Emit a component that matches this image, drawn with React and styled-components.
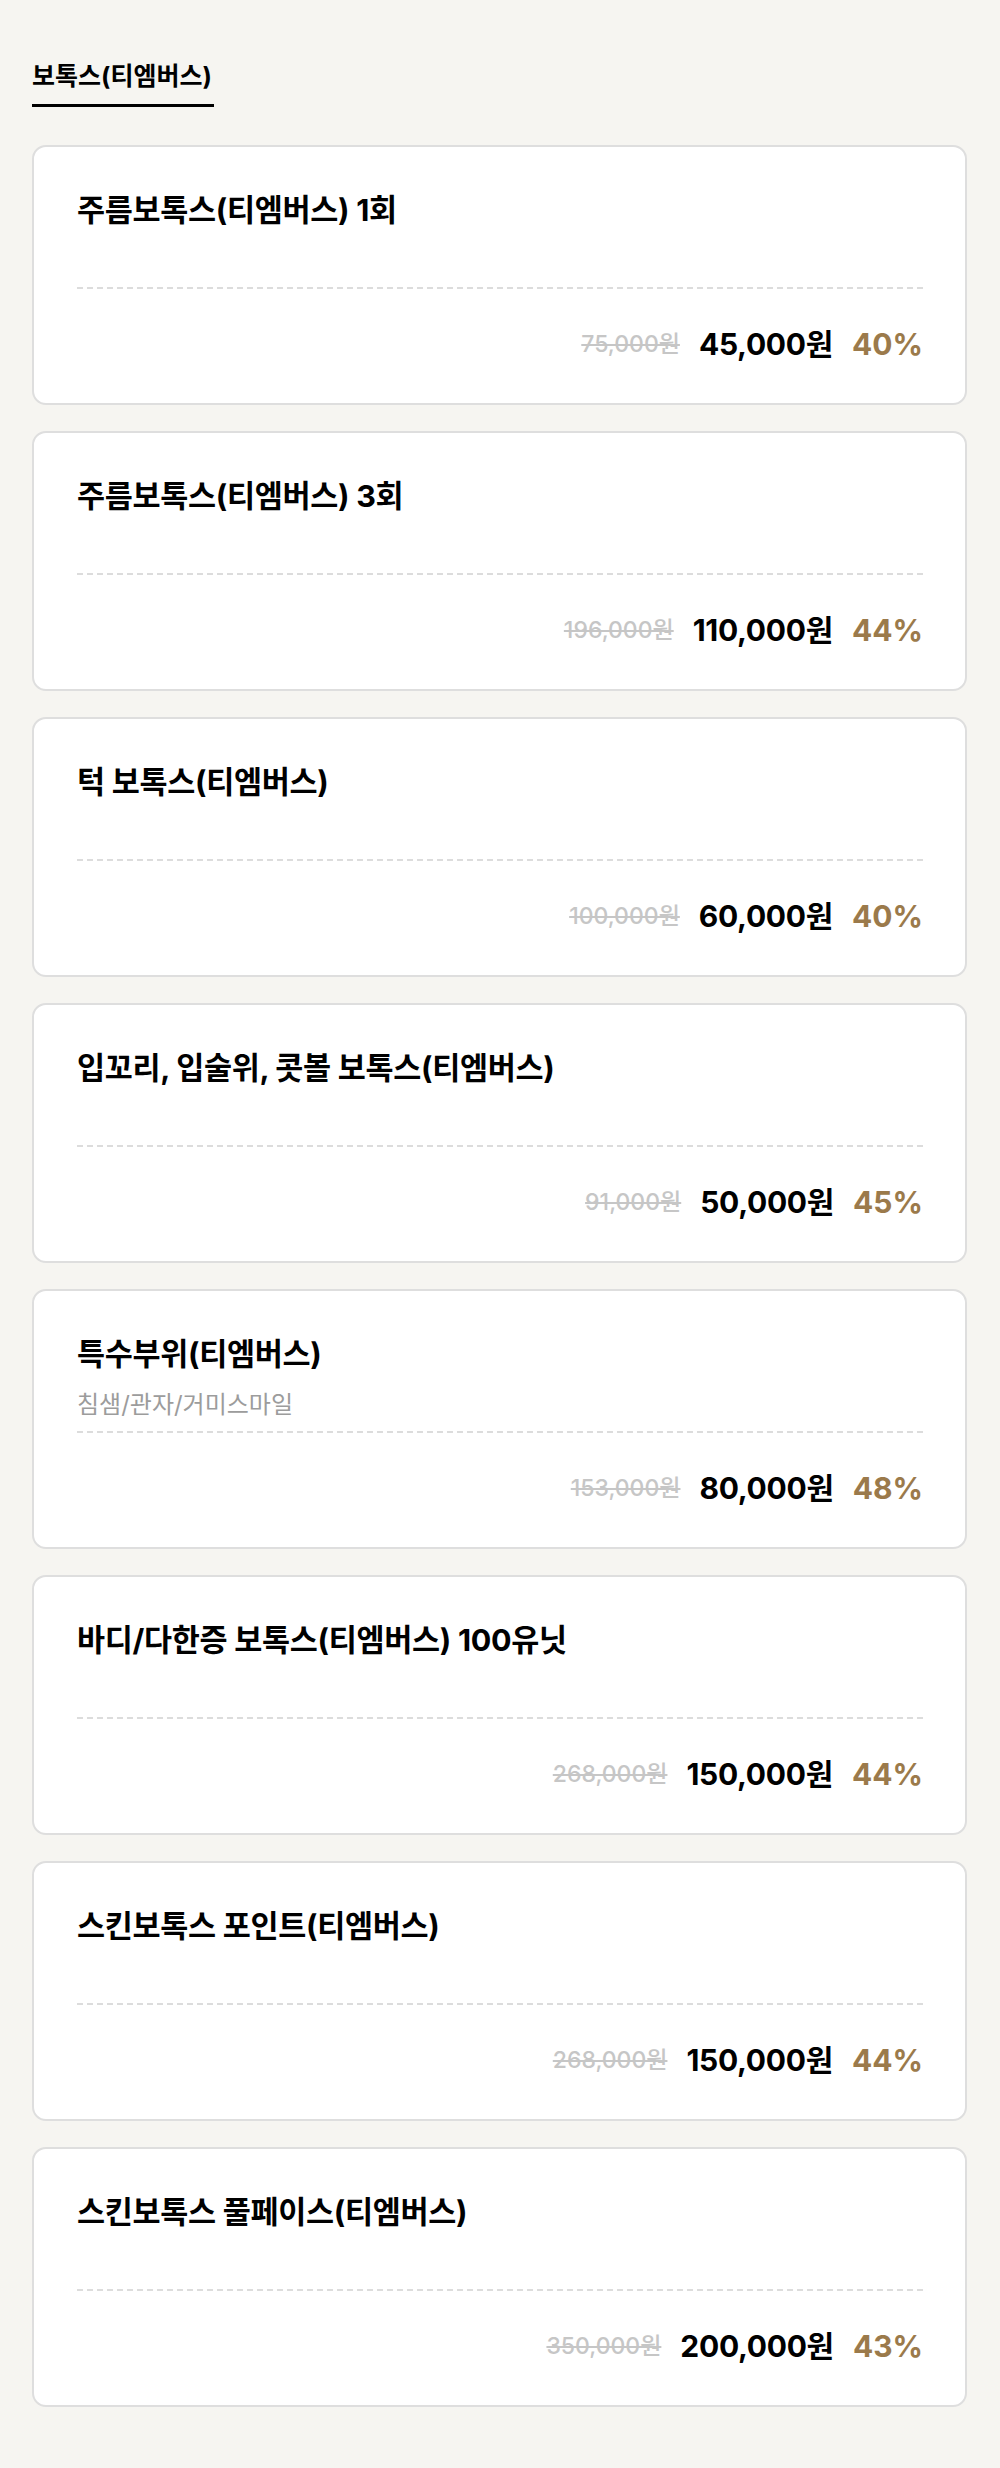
import React from "react";
import styled, { createGlobalStyle } from "styled-components";

const GlobalStyle = createGlobalStyle`
  html, body {
    margin: 0;
    padding: 0;
    background: #f6f5f1;
  }
  body {
    font-family: "Inter", "Noto Sans CJK KR", sans-serif;
    color: #000;
  }
  * { box-sizing: border-box; }
`;

const Page = styled.main`
  min-height: 2468px;
  padding: 60px 33px 61px 32px;
  background: #f6f5f1;
`;

const TabBar = styled.nav`
  display: flex;
  margin-bottom: 38px;
`;

const Tab = styled.div`
  font-size: 25px;
  line-height: 32px;
  font-weight: 700;
  padding: 0 2px 12px 0;
  border-bottom: 3px solid #000;
`;

const List = styled.div`
  display: flex;
  flex-direction: column;
  gap: 26px;
`;

const Card = styled.article`
  background: #fff;
  border: 2px solid #dedede;
  border-radius: 14px;
  padding: 0 42px 0 43px;
`;

const Head = styled.div`
  box-sizing: content-box;
  padding-top: 45px;
  min-height: 95px;
  border-bottom: 2px dashed #dcdcdc;
`;

const Title = styled.h3`
  margin: 0;
  font-size: 30.5px;
  line-height: 36px;
  font-weight: 700;
  letter-spacing: -0.3px;
`;

const Sub = styled.p`
  margin: 18px 0 0;
  font-size: 24px;
  line-height: 30px;
  font-weight: 400;
  color: #9c9c9c;
`;

const PriceRow = styled.div`
  display: flex;
  justify-content: flex-end;
  align-items: center;
  gap: 19px;
  padding: 35px 0 39px;
  line-height: 40px;
`;

const Original = styled.span`
  font-size: 23px;
  font-weight: 500;
  color: #c6c6c6;
  text-decoration: line-through;
  text-decoration-thickness: 2px;
`;

const Price = styled.span`
  font-size: 30px;
  font-weight: 700;
  letter-spacing: -0.3px;
`;

const Rate = styled.span`
  font-size: 30px;
  font-weight: 700;
  color: #9b7a4b;
`;

const items = [
  { title: "주름보톡스(티엠버스) 1회", orig: "75,000원", price: "45,000원", rate: "40%" },
  { title: "주름보톡스(티엠버스) 3회", orig: "196,000원", price: "110,000원", rate: "44%" },
  { title: "턱 보톡스(티엠버스)", orig: "100,000원", price: "60,000원", rate: "40%" },
  { title: "입꼬리, 입술위, 콧볼 보톡스(티엠버스)", orig: "91,000원", price: "50,000원", rate: "45%" },
  { title: "특수부위(티엠버스)", sub: "침샘/관자/거미스마일", orig: "153,000원", price: "80,000원", rate: "48%" },
  { title: "바디/다한증 보톡스(티엠버스) 100유닛", orig: "268,000원", price: "150,000원", rate: "44%" },
  { title: "스킨보톡스 포인트(티엠버스)", orig: "268,000원", price: "150,000원", rate: "44%" },
  { title: "스킨보톡스 풀페이스(티엠버스)", orig: "350,000원", price: "200,000원", rate: "43%" },
];

export default function App() {
  return (
    <>
      <GlobalStyle />
      <Page>
        <TabBar>
          <Tab>보톡스(티엠버스)</Tab>
        </TabBar>
        <List>
          {items.map((it, i) => (
            <Card key={i}>
              <Head>
                <Title>{it.title}</Title>
                {it.sub && <Sub>{it.sub}</Sub>}
              </Head>
              <PriceRow>
                <Original>{it.orig}</Original>
                <Price>{it.price}</Price>
                <Rate>{it.rate}</Rate>
              </PriceRow>
            </Card>
          ))}
        </List>
      </Page>
    </>
  );
}
